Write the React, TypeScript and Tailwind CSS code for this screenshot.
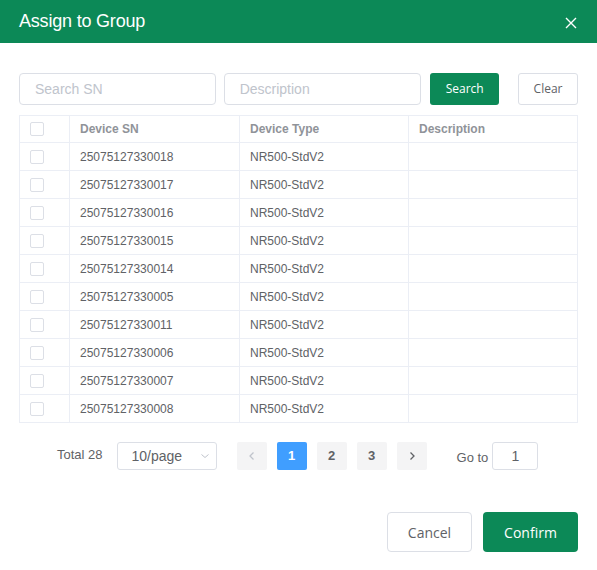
import React from "react";

const rows = [
  "25075127330018",
  "25075127330017",
  "25075127330016",
  "25075127330015",
  "25075127330014",
  "25075127330005",
  "25075127330011",
  "25075127330006",
  "25075127330007",
  "25075127330008",
];

function Box() {
  return <span className="block w-[14px] h-[14px] border border-[#dcdfe6] rounded-[2px] bg-white" />;
}

export default function App() {
  return (
    <div className="w-[597px] h-[570px] bg-white font-['Liberation_Sans',Arial,sans-serif] text-[#606266]">
      <div className="h-[43px] bg-[#0c8957] flex items-center justify-between pl-[19px] pr-[20px]">
        <span className="text-white text-[18px] tracking-[-0.2px]">Assign to Group</span>
        <svg width="12" height="12" viewBox="0 0 12 12" className="mt-[2px]">
          <path d="M1 1L11 11M11 1L1 11" stroke="white" strokeWidth="1.4" />
        </svg>
      </div>

      <div className="px-[19px] pt-[30px]">
        <div className="flex items-center h-[32px]">
          <div className="w-[197px] h-[32px] border border-[#dcdfe6] rounded-[4px] flex items-center px-[15px] text-[14px] text-[#c0c4cc]">Search SN</div>
          <div className="ml-[8px] w-[198px] h-[32px] border border-[#dcdfe6] rounded-[4px] flex items-center px-[15px] text-[14px] text-[#c0c4cc]">Description</div>
          <div className="ml-[9px] w-[69px] h-[32px] rounded-[3px] bg-[#0c8957] text-white text-[12px] flex items-center justify-center font-['Open_Sans',sans-serif]">Search</div>
          <div className="ml-[19px] w-[60px] h-[32px] rounded-[3px] border border-[#dcdfe6] text-[#606266] text-[12px] flex items-center justify-center font-['Open_Sans',sans-serif]">Clear</div>
        </div>

        <div className="mt-[10px] w-[559px] border-l border-r border-[#ebeef5] text-[12px]">
          <div className="flex h-[28px] border-t border-b border-[#ebeef5] text-[#909399] font-bold">
            <div className="w-[50px] border-r border-[#ebeef5] flex items-center pl-[10px]"><Box /></div>
            <div className="w-[170px] border-r border-[#ebeef5] flex items-center pl-[10px]">Device SN</div>
            <div className="w-[169px] border-r border-[#ebeef5] flex items-center pl-[10px]">Device Type</div>
            <div className="flex-1 flex items-center pl-[10px]">Description</div>
          </div>
          {rows.map((sn) => (
            <div key={sn} className="flex h-[28px] border-b border-[#ebeef5]">
              <div className="w-[50px] border-r border-[#ebeef5] flex items-center pl-[10px]"><Box /></div>
              <div className="w-[170px] border-r border-[#ebeef5] flex items-center pl-[10px]">{sn}</div>
              <div className="w-[169px] border-r border-[#ebeef5] flex items-center pl-[10px]">NR500-StdV2</div>
              <div className="flex-1" />
            </div>
          ))}
        </div>

        <div className="mt-[19px] flex items-center h-[28px] text-[13px]">
          <span className="ml-[38px] mt-[-2px]">Total 28</span>
          <div className="ml-[14px] w-[100px] h-[28px] border border-[#dcdfe6] rounded-[3px] flex items-center justify-between pl-[14px] pr-[6px] text-[14px]">
            <span>10/page</span>
            <svg width="10" height="10" viewBox="0 0 10 10"><path d="M1.5 3.5L5 6.5L8.5 3.5" fill="none" stroke="#c0c4cc" strokeWidth="1" /></svg>
          </div>
          <div className="ml-[20px] flex gap-[10px] font-bold">
            <div className="w-[30px] h-[28px] rounded-[2px] bg-[#f4f4f5] flex items-center justify-center">
              <svg width="10" height="10" viewBox="0 0 10 10"><path d="M6.5 1.5L3 5L6.5 8.5" fill="none" stroke="#c0c4cc" strokeWidth="1.3" /></svg>
            </div>
            <div className="w-[30px] h-[28px] rounded-[2px] bg-[#409eff] text-white flex items-center justify-center">1</div>
            <div className="w-[30px] h-[28px] rounded-[2px] bg-[#f4f4f5] flex items-center justify-center">2</div>
            <div className="w-[30px] h-[28px] rounded-[2px] bg-[#f4f4f5] flex items-center justify-center">3</div>
            <div className="w-[30px] h-[28px] rounded-[2px] bg-[#f4f4f5] flex items-center justify-center">
              <svg width="10" height="10" viewBox="0 0 10 10"><path d="M3.5 1.5L7 5L3.5 8.5" fill="none" stroke="#606266" strokeWidth="1.3" /></svg>
            </div>
          </div>
          <span className="ml-[30px] mt-[4px]">Go to</span>
          <div className="ml-[4px] w-[46px] h-[28px] border border-[#dcdfe6] rounded-[3px] flex items-center justify-center text-[14px]">1</div>
        </div>

        <div className="mt-[42px] flex justify-end font-['Open_Sans',sans-serif] text-[14px]">
          <div className="w-[85px] h-[40px] border border-[#dcdfe6] rounded-[4px] flex items-center justify-center text-[#606266]">Cancel</div>
          <div className="ml-[11px] w-[95px] h-[40px] rounded-[4px] bg-[#0c8957] text-white flex items-center justify-center">Confirm</div>
        </div>
      </div>
    </div>
  );
}
